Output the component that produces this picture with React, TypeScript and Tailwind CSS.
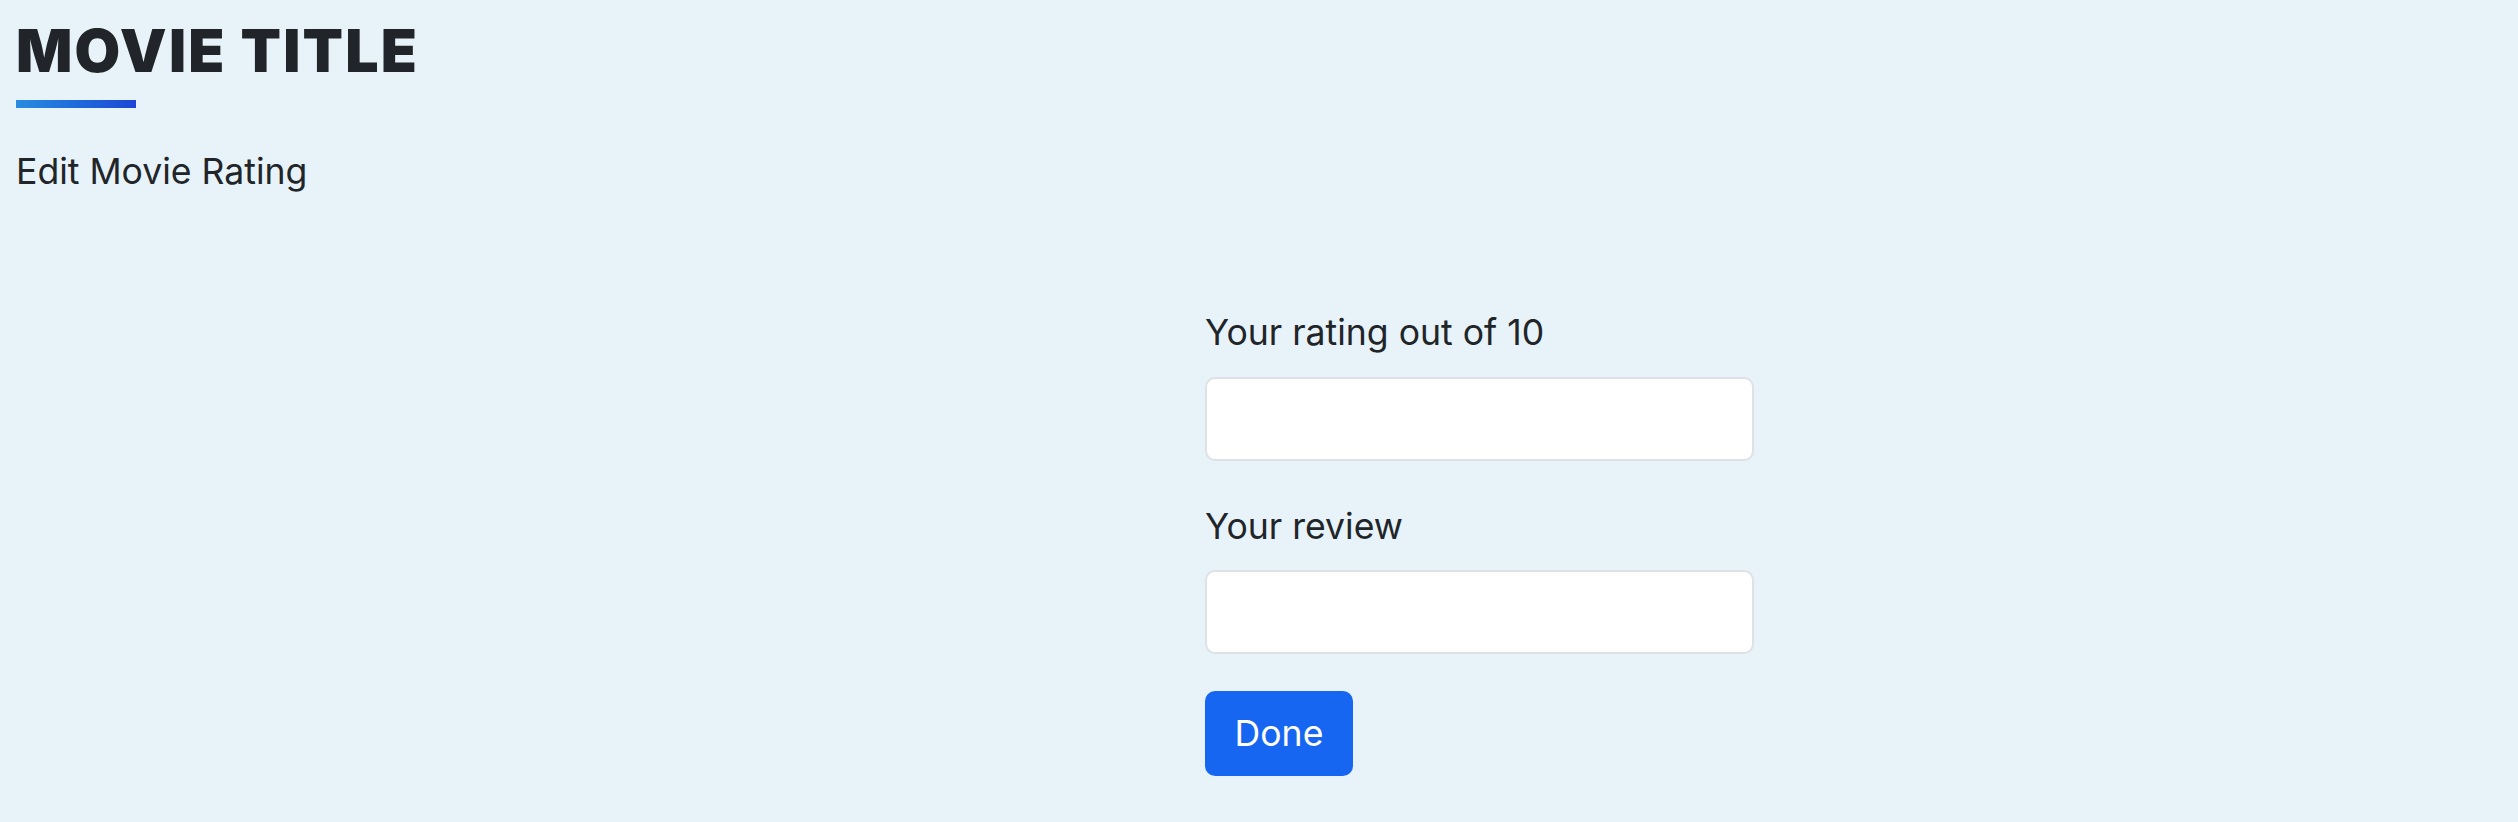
import React from "react";

export default function App() {
  return (
    <div className="w-full h-[822px] bg-[#e7f3f8] text-[#212529] font-['Inter','Noto_Sans',sans-serif] overflow-hidden">
      <div className="pl-[16px] pt-[21px]">
        <h1 className="text-[59px] leading-none font-black tracking-[0.037em] m-0">MOVIE TITLE</h1>
        <div className="mt-[20px] h-[8px] w-[120px] bg-gradient-to-r from-[#2a8ce0] to-[#1f44d6]" />
        <p className="mt-[37px] text-[35.6px] leading-[1.5]">Edit Movie Rating</p>
      </div>
      <form className="ml-[1205px] mt-[108px] w-[549px] flex flex-col" onSubmit={(e) => e.preventDefault()}>
        <label className="text-[35.6px] leading-[1.5]">Your rating out of 10</label>
        <input
          type="text"
          className="mt-[17px] h-[84px] w-full rounded-[10px] border-[2px] border-[#dee2e6] bg-white"
        />
        <label className="mt-[39px] text-[35.6px] leading-[1.5]">Your review</label>
        <input
          type="text"
          className="mt-[17px] h-[84px] w-full rounded-[10px] border-[2px] border-[#dee2e6] bg-white"
        />
        <button
          type="submit"
          className="mt-[37px] h-[85px] w-[148px] rounded-[10px] bg-[#1766f2] text-white text-[35.6px] leading-[1.5]"
        >
          Done
        </button>
      </form>
    </div>
  );
}
